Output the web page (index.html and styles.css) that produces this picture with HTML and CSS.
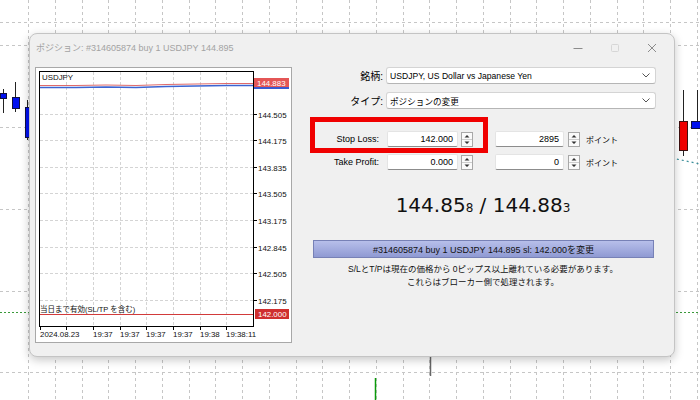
FILE: index.html
```html
<!DOCTYPE html>
<html lang="ja">
<head>
<meta charset="utf-8">
<title>ポジション</title>
<link rel="stylesheet" href="styles.css">
</head>
<body>
<div class="desk">
  <svg class="bg" width="700" height="400" viewBox="0 0 700 400">
    <g class="grid">
      <path d="M28.5 0V400M55.5 0V400M82.5 0V400M108.5 0V400M135.5 0V400M162.5 0V400M189.5 0V400M215.5 0V400M242.5 0V400M269.5 0V400M296.5 0V400M322.5 0V400M349.5 0V400M376.5 0V400M403.5 0V400M429.5 0V400M456.5 0V400M483.5 0V400M510.5 0V400M536.5 0V400M563.5 0V400M590.5 0V400M617.5 0V400M643.5 0V400M670.5 0V400M697.5 0V400"/>
      <path d="M0 22.5H700M0 45.5H700M0 127.5H700M0 209.5H700M0 291.5H700M0 372.5H700"/>
    </g>
    <path class="green-dash" d="M0 312.5H700"/>
    <path class="ma" d="M672 158 L686 161 L700 164"/>
    <g class="candle-blue">
      <path class="wick" d="M3.5 89V113M15.5 82V112M27.5 100V140"/>
      <rect x="0.5" y="93.5" width="6" height="5"/>
      <rect x="12.5" y="97.5" width="7" height="11"/>
      <rect x="25.5" y="107.5" width="5" height="30"/>
      <path class="wick" d="M697.5 90V121"/>
      <rect x="691.5" y="121.5" width="9" height="7"/>
    </g>
    <g class="candle-red">
      <path class="wick" d="M683.5 90V156"/>
      <rect x="679.5" y="121.5" width="8" height="29"/>
    </g>
    <path class="wick-gray" d="M430.5 357V376"/>
    <path class="wick-green" d="M375.5 378V400"/>
  </svg>

  <div class="dialog">
    <div class="titlebar">
      <span class="title">ポジション: #314605874 buy 1 USDJPY 144.895</span>
      <div class="controls">
        <span class="ctl"><svg width="10" height="10" viewBox="0 0 10 10"><path class="ico" d="M0.5 5.5H9.5"/></svg></span>
        <span class="ctl"><svg width="10" height="10" viewBox="0 0 10 10"><rect class="ico-off" x="1.5" y="1.5" width="7" height="7" rx="1"/></svg></span>
        <span class="ctl"><svg width="10" height="10" viewBox="0 0 10 10"><path class="ico" d="M1 1L9 9M9 1L1 9"/></svg></span>
      </div>
    </div>

    <div class="body">
      <div class="chart-panel">
        <svg class="chart" width="255" height="274" viewBox="0 0 255 274">
          <g class="cgrid">
            <path d="M30.5 4V258M57.5 4V258M84.5 4V258M110.5 4V258M137.5 4V258M164.5 4V258M190.5 4V258"/>
            <path d="M4 46.5H217M4 72.5H217M4 99.5H217M4 125.5H217M4 152.5H217M4 179.5H217M4 205.5H217M4 232.5H217"/>
          </g>
          <rect class="frame" x="3.5" y="3.5" width="214" height="255"/>
          <path class="ticks" d="M217 46.5H221M217 72.5H221M217 99.5H221M217 125.5H221M217 152.5H221M217 179.5H221M217 205.5H221M217 232.5H221M4.5 258V262M30.5 258V262M57.5 258V262M84.5 258V262M110.5 258V262M137.5 258V262M164.5 258V262M190.5 258V262"/>
          <polyline class="ask" points="4,17.5 40,17.5 70,17 100,17.5 130,16.5 160,16 190,15.5 217,15.5"/>
          <polyline class="bid" points="4,19.5 40,19.5 70,19 100,19.5 130,18.5 160,18 190,17.5 217,17.5"/>
          <path class="sl" d="M4 246.5H217"/>
          <text x="6" y="12">USDJPY</text>
          <text class="slt" x="4" y="244">当日まで有効(SL/TP を含む)</text>
          <rect class="bidlbl" x="218" y="18" width="35" height="3"/>
          <rect class="asklbl" x="218" y="10" width="35" height="9"/>
          <text class="wt" x="221" y="17.5">144.883</text>
          <text x="222" y="49.5">144.505</text>
          <text x="222" y="75.5">144.175</text>
          <text x="222" y="102.5">143.835</text>
          <text x="222" y="128.5">143.505</text>
          <text x="222" y="155.5">143.175</text>
          <text x="222" y="182.5">142.845</text>
          <text x="222" y="208.5">142.505</text>
          <text x="222" y="235.5">142.175</text>
          <rect class="sllbl" x="219" y="241" width="34" height="10"/>
          <text class="wt" x="222" y="249">142.000</text>
          <text x="4" y="269">2024.08.23</text>
          <text x="57" y="269">19:37</text>
          <text x="84" y="269">19:37</text>
          <text x="110" y="269">19:37</text>
          <text x="137" y="269">19:37</text>
          <text x="164" y="269">19:38</text>
          <text x="190" y="269">19:38:11</text>
        </svg>
      </div>

      <div class="form">
        <div class="sel-row">
          <span class="lbl">銘柄:</span>
          <div class="select"><span class="val">USDJPY, US Dollar vs Japanese Yen</span><svg class="chev" width="8" height="5" viewBox="0 0 8 5"><path d="M0.5 0.5L4 4L7.5 0.5"/></svg></div>
        </div>
        <div class="sel-row">
          <span class="lbl">タイプ:</span>
          <div class="select"><span class="val">ポジションの変更</span><svg class="chev" width="8" height="5" viewBox="0 0 8 5"><path d="M0.5 0.5L4 4L7.5 0.5"/></svg></div>
        </div>

        <div class="lvl-row first">
          <span class="lbl2">Stop Loss:</span>
          <div class="input">142.000</div>
          <svg class="spin" width="12" height="15" viewBox="0 0 12 15"><rect x="0.5" y="0.5" width="11" height="14"/><path class="div" d="M1 7.5H11"/><path class="tri" d="M3.5 5.5L6 3L8.5 5.5Z M3.5 9.5L6 12L8.5 9.5Z"/></svg>
          <div class="input pts">2895</div>
          <svg class="spin sp2" width="12" height="15" viewBox="0 0 12 15"><rect x="0.5" y="0.5" width="11" height="14"/><path class="div" d="M1 7.5H11"/><path class="tri" d="M3.5 5.5L6 3L8.5 5.5Z M3.5 9.5L6 12L8.5 9.5Z"/></svg>
          <span class="unit">ポイント</span>
          <div class="mark"></div>
        </div>
        <div class="lvl-row">
          <span class="lbl2">Take Profit:</span>
          <div class="input">0.000</div>
          <svg class="spin" width="12" height="15" viewBox="0 0 12 15"><rect x="0.5" y="0.5" width="11" height="14"/><path class="div" d="M1 7.5H11"/><path class="tri" d="M3.5 5.5L6 3L8.5 5.5Z M3.5 9.5L6 12L8.5 9.5Z"/></svg>
          <div class="input pts">0</div>
          <svg class="spin sp2" width="12" height="15" viewBox="0 0 12 15"><rect x="0.5" y="0.5" width="11" height="14"/><path class="div" d="M1 7.5H11"/><path class="tri" d="M3.5 5.5L6 3L8.5 5.5Z M3.5 9.5L6 12L8.5 9.5Z"/></svg>
          <span class="unit">ポイント</span>
        </div>

        <div class="price">144.85<small>8</small> / 144.88<small>3</small></div>

        <button class="apply">#314605874 buy 1 USDJPY 144.895 sl: 142.000を変更</button>

        <p class="note">S/LとT/Pは現在の価格から 0ピップス以上離れている必要があります。<br>これらはブローカー側で処理されます。</p>
      </div>
    </div>
  </div>
</div>
</body>
</html>
```

FILE: styles.css
```css
html, body {
  margin: 0;
  padding: 0;
  background: #fff;
}

.desk {
  position: relative;
  width: 700px;
  height: 400px;
  overflow: hidden;
  background: #fff;
  font-family: "Liberation Sans", "Noto Sans CJK JP", sans-serif;
  color: #000;
}

.bg {
  position: absolute;
  left: 0;
  top: 0;
  display: block;
}

.grid path {
  fill: none;
  stroke: #c6c6c6;
  stroke-width: 1;
  stroke-dasharray: 3 3;
}

.green-dash {
  fill: none;
  stroke: #3a9a3a;
  stroke-width: 1;
  stroke-dasharray: 2 2;
}

.ma {
  fill: none;
  stroke: #3a8f9a;
  stroke-width: 1.2;
  stroke-dasharray: 2 3;
}

.candle-blue rect {
  fill: #0010f0;
  stroke: #101040;
  stroke-width: 1;
}

.candle-red rect {
  fill: #f00000;
  stroke: #401010;
  stroke-width: 1;
}

.wick {
  fill: none;
  stroke: #222;
  stroke-width: 1;
}

.wick-gray {
  fill: none;
  stroke: #666;
  stroke-width: 1.5;
}

.wick-green {
  fill: none;
  stroke: #0a9a0a;
  stroke-width: 1.5;
}

/* dialog window */
.dialog {
  position: absolute;
  left: 29px;
  top: 33px;
  width: 646px;
  height: 324px;
  box-sizing: border-box;
  background: #f0f0f0;
  border: 1px solid #c4c4c4;
  border-radius: 8px;
  box-shadow: 0 3px 10px rgba(0, 0, 0, 0.22);
  display: flex;
  flex-direction: column;
}

.titlebar {
  height: 27px;
  display: flex;
  align-items: center;
  padding-left: 6px;
}

.title {
  flex: 1;
  font-size: 9px;
  color: #a3a3a3;
  white-space: nowrap;
}

.controls {
  display: flex;
  height: 100%;
  margin-right: 4px;
}

.ctl {
  width: 37px;
  display: flex;
  align-items: center;
  justify-content: center;
}

.ctl svg {
  display: block;
}

.ico {
  fill: none;
  stroke: #8c8c8c;
  stroke-width: 1;
}

.ico-off {
  fill: none;
  stroke: #d6d6d6;
  stroke-width: 1;
}

.body {
  display: flex;
  padding: 6px 0 0 5px;
}

/* chart panel */
.chart-panel {
  width: 257px;
  height: 276px;
  box-sizing: border-box;
  background: #fff;
  border: 1px solid #a8a8a8;
}

.chart {
  display: block;
}

.chart text {
  font-family: "Liberation Sans", "Noto Sans CJK JP", sans-serif;
  font-size: 7.9px;
  fill: #111;
}

.chart text.slt {
  font-size: 7.5px;
}

.chart text.wt {
  fill: #fff;
}

.cgrid path {
  fill: none;
  stroke: #d4d4d4;
  stroke-width: 1;
  stroke-dasharray: 3 2;
}

.frame {
  fill: none;
  stroke: #000;
  stroke-width: 1;
}

.ticks {
  fill: none;
  stroke: #000;
  stroke-width: 1;
}

.ask {
  fill: none;
  stroke: #e06a6a;
  stroke-width: 1;
}

.bid {
  fill: none;
  stroke: #3c64d2;
  stroke-width: 1.4;
}

.sl {
  fill: none;
  stroke: #d23a3a;
  stroke-width: 1;
}

.asklbl {
  fill: #e45656;
}

.bidlbl {
  fill: #3c5ad0;
}

.sllbl {
  fill: #cf2f2f;
}

/* form */
.form {
  margin-left: 8px;
  width: 366px;
  display: flex;
  flex-direction: column;
}

.sel-row {
  display: flex;
  align-items: center;
  height: 17px;
}

.sel-row + .sel-row {
  margin-top: 8px;
}

.lbl {
  width: 86px;
  box-sizing: border-box;
  padding-right: 3px;
  text-align: right;
  font-size: 10px;
  white-space: nowrap;
}

.select {
  width: 270px;
  height: 17px;
  box-sizing: border-box;
  background: #fff;
  border: 1px solid #d4d4d4;
  border-bottom-color: #b5b5b5;
  border-radius: 3px;
  display: flex;
  align-items: center;
  padding: 0 5px 0 3px;
  font-size: 8.6px;
}

.select .val {
  flex: 1;
  white-space: nowrap;
}

.chev {
  display: block;
}

.chev path {
  fill: none;
  stroke: #555;
  stroke-width: 1;
}

.lvl-row {
  position: relative;
  display: flex;
  align-items: center;
  height: 16px;
  margin-top: 7px;
}

.lvl-row.first {
  margin-top: 22px;
}

.lbl2 {
  width: 79px;
  margin-right: 8px;
  text-align: right;
  font-size: 9px;
  white-space: nowrap;
}

.input {
  width: 71px;
  height: 16px;
  box-sizing: border-box;
  background: #fff;
  border: 1px solid #e4e4e4;
  border-bottom: 1px solid #8c8c8c;
  border-radius: 2px;
  text-align: right;
  padding-right: 4px;
  font-size: 9px;
  line-height: 14px;
}

.input.pts {
  width: 69px;
  margin-left: 22px;
}

.spin {
  display: block;
  margin-left: 3px;
}

.spin.sp2 {
  margin-left: 4px;
}

.spin rect {
  fill: #fafafa;
  stroke: #a8a8a8;
  stroke-width: 1;
}

.spin .div {
  fill: none;
  stroke: #cdcdcd;
}

.spin .tri {
  fill: #333;
}

.unit {
  margin-left: 6px;
  font-size: 8px;
  white-space: nowrap;
}

.mark {
  position: absolute;
  left: 10px;
  top: -14px;
  width: 178px;
  height: 36px;
  box-sizing: border-box;
  border: 5px solid #f00000;
}

.price {
  margin-top: 23px;
  text-align: center;
  font-family: "DejaVu Sans", sans-serif;
  font-size: 20px;
  line-height: 24px;
  color: #111;
}

.price small {
  font-size: 12px;
}

.apply {
  margin: 20px 0 0 13px;
  width: 341px;
  height: 18px;
  padding: 0;
  border: 1px solid #7781b6;
  background: linear-gradient(#b7bfea, #8f9ad3);
  font-family: "Liberation Sans", "Noto Sans CJK JP", sans-serif;
  font-size: 9px;
  color: #111;
}

.note {
  margin: 5px 0 0;
  text-align: center;
  font-size: 8.5px;
  line-height: 13px;
  color: #111;
}
```
